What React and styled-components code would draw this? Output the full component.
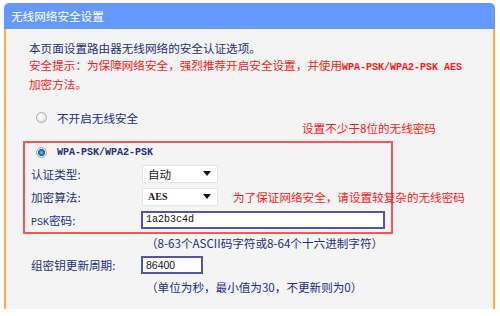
import React from "react";
import styled, { createGlobalStyle } from "styled-components";

const GlobalStyle = createGlobalStyle`
  body {
    margin: 0;
    background: #ffffff;
    font-family: "Noto Sans CJK SC", "Noto Sans", sans-serif;
  }
`;

const navy = "#22307e";
const red = "#ff1a1a";

const Panel = styled.div`
  margin: 3px 0 0 4px;
  width: 491px;
`;

const Header = styled.div`
  height: 26px;
  display: flex;
  align-items: center;
  padding-left: 7px;
  background: #6699ff;
  border-radius: 5px 5px 0 0;
  color: #ffffff;
  font-size: 11.6px;
`;

const Body = styled.div`
  box-sizing: border-box;
  height: 280px;
  padding: 11px 0 0 17px;
  background: #f4f4f4;
  border-left: 2px solid #ffab4a;
  border-right: 2px solid #ffab4a;
`;

const Intro = styled.div`
  padding-left: 6px;
  font-size: 11.6px;
  line-height: 16.5px;
  color: ${navy};
`;

const Warn = styled.div`
  color: ${red};
`;

const Mono = styled.span`
  font-family: "Liberation Mono", monospace;
  font-size: 10px;
  font-weight: ${(p) => (p.$bold ? 700 : 400)};
`;

const NoSecRow = styled.div`
  margin-top: 17px;
  height: 26px;
  display: grid;
  grid-template-columns: 279px auto;
`;

const RadioLine = styled.label`
  display: flex;
  align-items: center;
  height: 16px;
  padding-left: ${(p) => p.$indent}px;
  font-size: 11.6px;
  color: ${navy};
  white-space: nowrap;
`;

const Radio = styled.span`
  box-sizing: border-box;
  width: 11px;
  height: 11px;
  margin-right: 10px;
  border-radius: 50%;
  border: 1px solid #a9a9a9;
  background: ${(p) =>
    p.$checked
      ? "radial-gradient(circle, #4fd0f0 0, #1a6fb0 2.5px, #2a5a80 3.2px, #e9e9e9 3.8px)"
      : "radial-gradient(circle at 40% 40%, #ffffff 0, #dcdcdc 100%)"};
  flex: none;
`;

const Hint = styled.div`
  align-self: end;
  line-height: 16px;
  font-size: 11.6px;
  color: ${red};
  white-space: nowrap;
`;

const SecurityBox = styled.div`
  box-sizing: border-box;
  margin-top: 5px;
  width: 370px;
  padding: 2px 0 3px 6px;
  border: 2px solid #ff5555;
  display: flex;
  flex-direction: column;
  gap: 4px;
`;

const Fields = styled.div`
  display: flex;
  flex-direction: column;
  gap: 5px;
`;

const FieldRow = styled.div`
  display: grid;
  grid-template-columns: 110px auto auto;
  justify-content: start;
  align-items: center;
  height: 18px;
  padding-left: ${(p) => p.$indent || 0}px;
  margin-top: ${(p) => p.$top || 0}px;
`;

const Label = styled.span`
  font-size: 11.6px;
  color: ${navy};
  white-space: nowrap;
`;

const Select = styled.div`
  box-sizing: border-box;
  width: 76px;
  height: 18px;
  margin-left: 1px;
  padding: 0 6px 0 5px;
  display: flex;
  align-items: center;
  justify-content: space-between;
  background: #ffffff;
  border: 1px solid #e4e4e4;
  font-size: 11.6px;
  color: #222;
`;

const SelectValue = styled.span`
  font-family: ${(p) => (p.$mono ? '"Liberation Serif", serif' : "inherit")};
  font-weight: ${(p) => (p.$mono ? 700 : 400)};
  font-size: ${(p) => (p.$mono ? "10px" : "11.6px")};
`;

const TextInput = styled.div`
  box-sizing: border-box;
  width: ${(p) => p.$w}px;
  height: ${(p) => p.$h || 18}px;
  padding-left: 3px;
  display: flex;
  align-items: center;
  background: #ffffff;
  border: 2px solid #5454a6;
  font-family: ${(p) =>
    p.$sans ? '"Liberation Sans", sans-serif' : '"Liberation Mono", monospace'};
  font-size: ${(p) => (p.$sans ? "10.5px" : "10px")};
  color: #111;
`;

const InlineWarn = styled.span`
  margin-left: 15px;
  font-size: 11.6px;
  color: ${red};
  white-space: nowrap;
`;

const Note = styled.div`
  margin-top: ${(p) => p.$top}px;
  padding-left: 123px;
  line-height: 16px;
  font-size: 11.6px;
  color: ${navy};
  white-space: nowrap;
`;

const Arrow = () => (
  <svg width="8" height="5" viewBox="0 0 8 5">
    <path d="M0 0 H8 L4 5 Z" fill="#111" />
  </svg>
);

export default function App() {
  return (
    <>
      <GlobalStyle />
      <Panel>
        <Header>无线网络安全设置</Header>
        <Body>
          <Intro>
            本页面设置路由器无线网络的安全认证选项。
            <Warn>
              安全提示：为保障网络安全，强烈推荐开启安全设置，并使用
              <Mono $bold>WPA-PSK/WPA2-PSK AES</Mono>
              <br />
              加密方法。
            </Warn>
          </Intro>

          <NoSecRow>
            <RadioLine $indent={13}>
              <Radio />
              不开启无线安全
            </RadioLine>
            <Hint>设置不少于8位的无线密码</Hint>
          </NoSecRow>

          <SecurityBox>
            <RadioLine $indent={5}>
              <Radio $checked />
              <Mono $bold>WPA-PSK/WPA2-PSK</Mono>
            </RadioLine>
            <Fields>
              <FieldRow>
                <Label>认证类型:</Label>
                <Select>
                  <SelectValue>自动</SelectValue>
                  <Arrow />
                </Select>
              </FieldRow>
              <FieldRow>
                <Label>加密算法:</Label>
                <Select>
                  <SelectValue $mono>AES</SelectValue>
                  <Arrow />
                </Select>
                <InlineWarn>为了保证网络安全，请设置较复杂的无线密码</InlineWarn>
              </FieldRow>
              <FieldRow>
                <Label>
                  <Mono>PSK</Mono>密码:
                </Label>
                <TextInput $w={244} $h={18}>1a2b3c4d</TextInput>
              </FieldRow>
            </Fields>
          </SecurityBox>

          <Note $top={1}>（8-63个ASCII码字符或8-64个十六进制字符）</Note>

          <FieldRow $indent={8} $top={5}>
            <Label>组密钥更新周期:</Label>
            <TextInput $w={62} $sans>86400</TextInput>
          </FieldRow>

          <Note $top={5}>（单位为秒，最小值为30，不更新则为0）</Note>
        </Body>
      </Panel>
    </>
  );
}
